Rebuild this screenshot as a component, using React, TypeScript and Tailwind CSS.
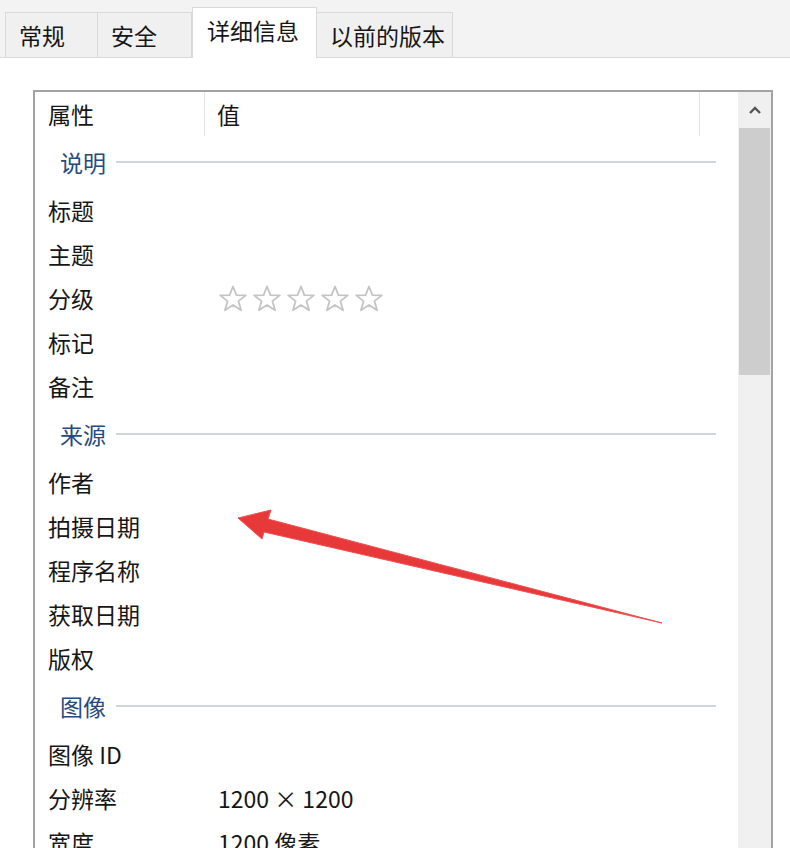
type Row = { label: string; value?: string; stars?: boolean };

const groups: { title: string; rows: Row[] }[] = [
  {
    title: "说明",
    rows: [
      { label: "标题" },
      { label: "主题" },
      { label: "分级", stars: true },
      { label: "标记" },
      { label: "备注" },
    ],
  },
  {
    title: "来源",
    rows: [
      { label: "作者" },
      { label: "拍摄日期" },
      { label: "程序名称" },
      { label: "获取日期" },
      { label: "版权" },
    ],
  },
  {
    title: "图像",
    rows: [
      { label: "图像 ID" },
      { label: "分辨率", value: "1200 × 1200" },
      { label: "宽度", value: "1200 像素" },
    ],
  },
];

const tabs = [
  { name: "常规", w: "w-[93px]" },
  { name: "安全", w: "w-[95px]" },
  { name: "详细信息", w: "w-[125px]", active: true },
  { name: "以前的版本", w: "w-[137px]" },
];

function Star() {
  return (
    <svg width="30" height="27" viewBox="0 0 30 27" fill="none">
      <path
        d="M15 1.5 L18.4 10.2 L27.8 10.4 L20.4 16.1 L23.1 25.3 L15 19.9 L6.9 25.3 L9.6 16.1 L2.2 10.4 L11.6 10.2 Z"
        stroke="#c4c4c4"
        strokeWidth="1.8"
        strokeLinejoin="round"
      />
    </svg>
  );
}

export default function App() {
  return (
    <div className="relative w-[790px] h-[848px] overflow-hidden bg-white text-[23px] text-[#161616] font-['Noto_Sans_CJK_SC','Noto_Sans',sans-serif]">
      {/* tab strip */}
      <div className="h-[58px] bg-[#f3f3f3] border-b border-[#d9d9d9] flex items-end pl-[5px]">
        {tabs.map((t) =>
          t.active ? (
            <div
              key={t.name}
              className={`${t.w} h-[51px] -mb-px bg-white border border-b-0 border-[#d9d9d9] flex items-center pl-[14px] pb-[6px] leading-none`}
            >
              {t.name}
            </div>
          ) : (
            <div
              key={t.name}
              className={`${t.w} h-[45px] bg-[#f0f0f0] border border-b-0 border-[#d9d9d9] -ml-px first:ml-0 flex items-center pl-[13px] leading-none`}
            >
              {t.name}
            </div>
          )
        )}
      </div>

      {/* list box */}
      <div className="pt-[32px] pl-[33px] pr-[17px]">
        <div className="h-[900px] border-2 border-[#a3a3a3] flex">
          <div className="flex-1 pr-[22px]">
            <div className="h-[44px] flex leading-none">
              <div className="w-[170px] pl-[13px] flex items-center border-r border-[#e6e6e6]">属性</div>
              <div className="w-[495px] pl-[12px] flex items-center border-r border-[#e6e6e6]">值</div>
            </div>
            {groups.map((g) => (
              <div key={g.title}>
                <div className="h-[52px] flex items-center pl-[25px] leading-none">
                  <span className="text-[#264a7c]">{g.title}</span>
                  <div className="flex-1 ml-[10px] h-[2px] bg-[#cfd6de]" />
                </div>
                {g.rows.map((r) => (
                  <div key={r.label} className="h-[44px] flex items-center leading-none">
                    <div className="w-[170px] pl-[13px]">{r.label}</div>
                    <div className="pl-[13px] flex items-center gap-[4px]">
                      {r.stars ? (
                        <>
                          <Star />
                          <Star />
                          <Star />
                          <Star />
                          <Star />
                        </>
                      ) : (
                        r.value
                      )}
                    </div>
                  </div>
                ))}
              </div>
            ))}
          </div>
          {/* scrollbar */}
          <div className="w-[33px] bg-[#f0f0f0] flex flex-col">
            <div className="h-[36px] flex items-center justify-center">
              <svg width="14" height="10" viewBox="0 0 14 10">
                <path d="M2 8 L7 3 L12 8" stroke="#555" strokeWidth="2.4" fill="none" />
              </svg>
            </div>
            <div className="mx-[1px] h-[247px] bg-[#cdcdcd]" />
          </div>
        </div>
      </div>

      {/* red annotation arrow */}
      <svg className="absolute left-0 top-0 pointer-events-none" width="790" height="848">
        <polygon
          points="238,518 271,510 268,519 662,623 264,532 262,539"
          fill="#e8393a"
          stroke="#ef5050"
          strokeWidth="1"
          strokeLinejoin="round"
        />
      </svg>
    </div>
  );
}
